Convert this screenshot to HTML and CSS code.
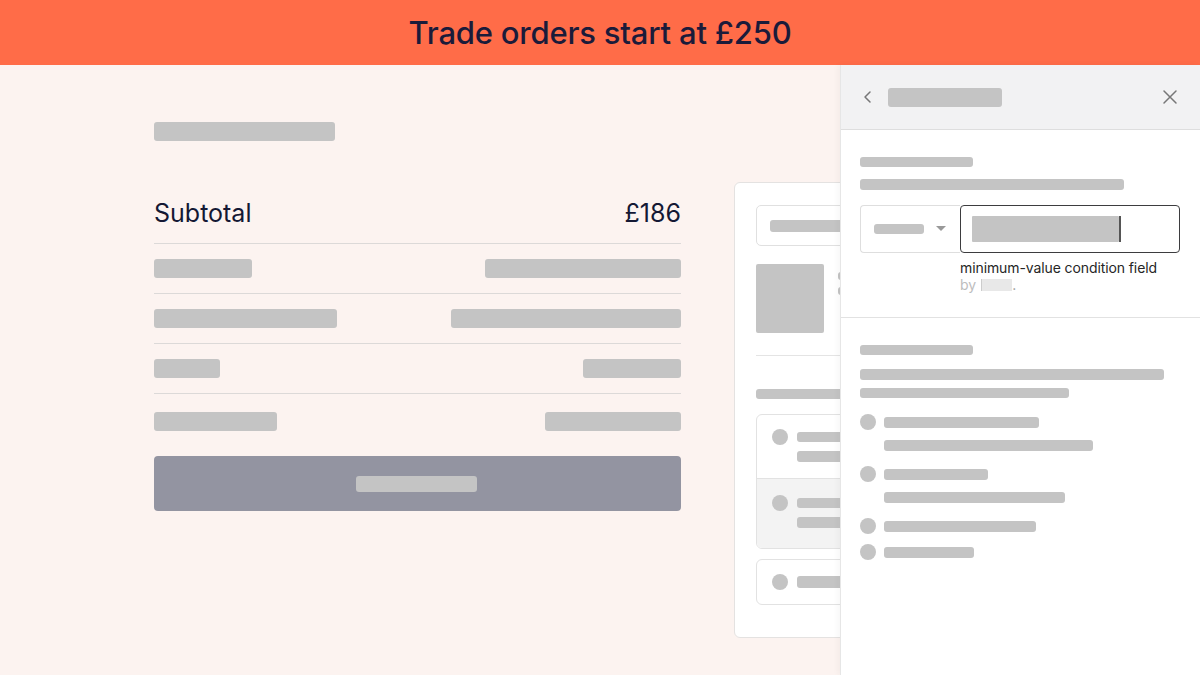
FILE: index.html
```html
<!DOCTYPE html>
<html lang="en">
<head>
<meta charset="utf-8">
<title>Trade orders</title>
<link rel="stylesheet" href="styles.css">
</head>
<body>
<header class="banner">Trade orders start at £250</header>
<main class="stage">
  <section class="summary">
    <div class="sk sk-title"></div>
    <div class="row row-subtotal">
      <span class="label">Subtotal</span>
      <span class="amount">£186</span>
    </div>
    <div class="row"><div class="sk w98"></div><div class="sk w196"></div></div>
    <div class="row"><div class="sk w183"></div><div class="sk w230"></div></div>
    <div class="row"><div class="sk w66"></div><div class="sk w98"></div></div>
    <div class="row row-last"><div class="sk w123"></div><div class="sk w136"></div></div>
    <div class="btn"><div class="sk btn-label"></div></div>
  </section>

  <section class="card">
    <div class="card-input"><div class="sk card-input-bar"></div></div>
    <div class="product">
      <div class="thumb"></div>
      <div class="product-lines">
        <div class="sk pl1"></div>
        <div class="sk pl2"></div>
      </div>
    </div>
    <div class="card-divider"></div>
    <div class="sk card-heading"></div>
    <div class="opt-group">
      <div class="opt">
        <span class="dot"></span>
        <div class="opt-lines"><div class="sk ol1"></div><div class="sk ol2"></div></div>
      </div>
      <div class="opt opt-active">
        <span class="dot"></span>
        <div class="opt-lines"><div class="sk ol1"></div><div class="sk ol2"></div></div>
      </div>
    </div>
    <div class="opt opt-single">
      <span class="dot"></span>
      <div class="opt-lines"><div class="sk ol3"></div></div>
    </div>
  </section>

  <aside class="panel">
    <div class="panel-head">
      <svg class="ico-back" width="12" height="14" viewBox="0 0 12 14" aria-hidden="true"><path d="M8 2 L3 7 L8 12" fill="none" stroke="#777" stroke-width="1.5" stroke-linecap="round" stroke-linejoin="round"/></svg>
      <div class="sk head-bar"></div>
      <svg class="ico-close" width="16" height="16" viewBox="0 0 16 16" aria-hidden="true"><path d="M2 2 L14 14 M14 2 L2 14" fill="none" stroke="#777" stroke-width="1.5" stroke-linecap="round"/></svg>
    </div>
    <div class="panel-sec sec-one">
      <div class="sk p-b1"></div>
      <div class="sk p-b2"></div>
      <div class="field">
        <div class="select">
          <div class="sk sel-bar"></div>
          <svg width="10" height="6" viewBox="0 0 10 6" aria-hidden="true"><path d="M0 0 L10 0 L5 5 Z" fill="#999"/></svg>
        </div>
        <div class="input">
          <div class="sk input-bar"></div>
          <span class="caret"></span>
        </div>
      </div>
      <div class="hint">
        <div class="hint-main">minimum-value condition field</div>
        <div class="hint-by">by <span class="hint-name"></span><span class="hint-dot">.</span></div>
      </div>
    </div>
    <div class="panel-sec sec-two">
      <div class="sk p-b1"></div>
      <div class="sk p-b3"></div>
      <div class="sk p-b4"></div>
      <ul class="plist">
        <li class="pitem">
          <span class="dot"></span>
          <div class="pitem-lines"><div class="sk pw155"></div><div class="sk pw209"></div></div>
        </li>
        <li class="pitem">
          <span class="dot"></span>
          <div class="pitem-lines"><div class="sk pw104"></div><div class="sk pw181"></div></div>
        </li>
        <li class="pitem">
          <span class="dot"></span>
          <div class="pitem-lines"><div class="sk pw152"></div></div>
        </li>
        <li class="pitem pitem-last">
          <span class="dot"></span>
          <div class="pitem-lines"><div class="sk pw90"></div></div>
        </li>
      </ul>
    </div>
  </aside>
</main>
</body>
</html>
```
FILE: styles.css
```css
* { box-sizing: border-box; }
html, body { margin: 0; padding: 0; }
body {
  width: 1200px;
  height: 675px;
  overflow: hidden;
  font-family: Inter, "Noto Sans", "Liberation Sans", sans-serif;
  background: #fcf3f0;
  color: #141834;
}
.sk { background: #c4c4c4; border-radius: 3px; }

.banner {
  height: 65px;
  background: #ff6c48;
  display: flex;
  align-items: center;
  justify-content: center;
  font-size: 31px;
  font-weight: 500;
  color: #1b1b3a;
  letter-spacing: -0.2px;
}

.stage {
  position: relative;
  height: 610px;
  display: flex;
  align-items: flex-start;
  padding-left: 154px;
}

/* left summary */
.summary { width: 527px; padding-top: 57px; }
.sk-title { width: 181px; height: 19px; }
.row {
  display: flex;
  justify-content: space-between;
  align-items: center;
  padding: 15px 0;
  border-bottom: 1px solid #dcd9d8;
}
.row .sk { height: 19px; }
.row-subtotal { margin-top: 57px; padding-top: 0; padding-bottom: 15px; }
.row-subtotal .label, .row-subtotal .amount { font-size: 25px; line-height: 30px; }
.row-last { border-bottom: none; padding-top: 18px; }
.w98 { width: 98px; } .w196 { width: 196px; } .w183 { width: 183px; } .w230 { width: 230px; }
.w66 { width: 66px; } .w123 { width: 123px; } .w136 { width: 136px; }
.btn {
  margin-top: 10px;
  height: 55px;
  background: #9394a1;
  border-radius: 4px;
  display: flex;
  align-items: center;
  justify-content: center;
}
.btn-label { width: 121px; height: 16px; margin-right: 2px; }

/* middle card */
.card {
  margin-left: 53px;
  margin-top: 117px;
  width: 320px;
  height: 456px;
  background: #ffffff;
  border: 1px solid #e4e2e1;
  border-radius: 6px;
  padding: 22px 21px;
  flex-shrink: 0;
}
.card-input {
  height: 41px;
  border: 1px solid #e0e0e0;
  border-radius: 5px;
  display: flex;
  align-items: center;
  padding-left: 13px;
}
.card-input-bar { width: 180px; height: 12px; }
.product { display: flex; margin-top: 18px; gap: 14px; }
.thumb { width: 68px; height: 69px; background: #c4c4c4; border-radius: 2px; }
.product-lines { display: flex; flex-direction: column; gap: 7px; padding-top: 8px; }
.pl1 { width: 120px; height: 8px; }
.pl2 { width: 90px; height: 8px; }
.card-divider { height: 1px; background: #e4e4e4; margin-top: 22px; }
.card-heading { width: 200px; height: 10px; margin-top: 33px; }
.opt-group {
  margin-top: 15px;
  border: 1px solid #e2e2e2;
  border-radius: 6px;
  overflow: hidden;
}
.opt {
  display: flex;
  align-items: flex-start;
  gap: 9px;
  padding: 14px 15px 16px;
}
.opt-active { background: #f3f3f3; border-top: 1px solid #e2e2e2; padding-top: 16px; padding-bottom: 20px; }
.dot { width: 16px; height: 16px; border-radius: 50%; background: #c4c4c4; flex-shrink: 0; }
.opt-lines { display: flex; flex-direction: column; gap: 9px; padding-top: 3px; }
.ol1 { width: 140px; height: 10px; }
.ol2 { width: 120px; height: 11px; }
.ol3 { width: 140px; height: 12px; }
.opt-single {
  margin-top: 10px;
  border: 1px solid #e2e2e2;
  border-radius: 6px;
  align-items: center;
  height: 46px;
  padding: 0 15px;
}
.opt-single .opt-lines { padding-top: 0; }

/* right panel (drawer overlay) */
.panel {
  position: absolute;
  top: 0;
  right: 0;
  width: 360px;
  height: 610px;
  background: #ffffff;
  border-left: 1px solid #e6e6e6;
  box-shadow: -2px 0 6px rgba(0,0,0,0.04);
}
.panel-head {
  height: 65px;
  background: #f2f2f3;
  border-bottom: 1px solid #dedede;
  display: flex;
  align-items: center;
  padding: 0 22px 0 21px;
}
.ico-back { flex-shrink: 0; }
.head-bar { width: 114px; height: 19px; margin-left: 14px; }
.ico-close { margin-left: auto; }
.panel-sec { padding-left: 19px; }
.sec-one { padding-top: 27px; padding-bottom: 23px; border-bottom: 1px solid #e2e2e2; }
.p-b1 { width: 113px; height: 10px; }
.p-b2 { width: 264px; height: 11px; margin-top: 12px; }
.field { display: flex; margin-top: 15px; height: 48px; }
.select {
  width: 100px;
  border: 1px solid #dedede;
  border-right: none;
  border-radius: 4px 0 0 4px;
  display: flex;
  align-items: center;
  padding-left: 13px;
  gap: 12px;
}
.sel-bar { width: 50px; height: 10px; }
.input {
  width: 220px;
  border: 1.5px solid #3d3d3f;
  border-radius: 4px;
  display: flex;
  align-items: center;
  padding-left: 11px;
}
.input-bar { width: 147px; height: 26px; border-radius: 1px; }
.caret { width: 1.5px; height: 26px; background: #555; }
.hint { margin-left: 100px; margin-top: 7px; font-size: 14px; }
.hint-main { line-height: 16px; color: #262626; letter-spacing: -0.1px; }
.hint-by { line-height: 18px; color: #bdbdbd; display: flex; align-items: center; }
.hint-name { display: inline-block; width: 31px; height: 12px; margin-left: 5px; background: #e8e8e8; border-left: 1px solid #ccc; }
.hint-dot { color: #999; }
.sec-two { padding-top: 27px; }
.p-b3 { width: 304px; height: 11px; margin-top: 14px; }
.p-b4 { width: 209px; height: 10px; margin-top: 8px; }
.plist { list-style: none; margin: 16px 0 0; padding: 0; }
.pitem { display: flex; align-items: flex-start; gap: 8px; }
.pitem .dot { width: 16px; height: 16px; }
.pitem-lines { display: flex; flex-direction: column; gap: 12px; padding-top: 3px; }
.pitem-lines .sk { height: 11px; }
.pitem + .pitem { margin-top: 15px; }
.pitem-last.pitem { margin-top: 10px; }
.pw155 { width: 155px; } .pw209 { width: 209px; } .pw104 { width: 104px; } .pw181 { width: 181px; }
.pw152 { width: 152px; } .pw90 { width: 90px; }
```
